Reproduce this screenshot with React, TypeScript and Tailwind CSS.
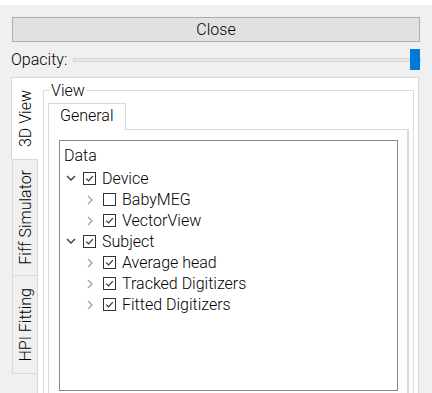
type Row = { label: string; child?: boolean; open?: boolean; checked: boolean };

const rows: Row[] = [
  { label: "Device", open: true, checked: true },
  { label: "BabyMEG", child: true, checked: false },
  { label: "VectorView", child: true, checked: true },
  { label: "Subject", open: true, checked: true },
  { label: "Average head", child: true, checked: true },
  { label: "Tracked Digitizers", child: true, checked: true },
  { label: "Fitted Digitizers", child: true, checked: true },
];

function Chevron({ open }: { open?: boolean }) {
  return (
    <div className="flex w-[13px] justify-center">
      {open ? (
        <svg width="10" height="6" viewBox="0 0 10 6" className="-mt-[2px]">
          <path d="M1 1 L5 5 L9 1" fill="none" stroke="#454545" strokeWidth="1.5" />
        </svg>
      ) : (
        <svg width="6" height="10" viewBox="0 0 6 10" className="-ml-[1px]">
          <path d="M1 1 L5 5 L1 9" fill="none" stroke="#a3a3a3" strokeWidth="1.4" />
        </svg>
      )}
    </div>
  );
}

function Check({ checked }: { checked: boolean }) {
  return (
    <div className="ml-[6px] flex h-[13px] w-[13px] items-center justify-center border border-[#333333] bg-white">
      {checked && (
        <svg width="11" height="11" viewBox="0 0 11 11">
          <path d="M2.2 5.6 L4.6 8 L8.9 3.2" fill="none" stroke="#333333" strokeWidth="1.2" />
        </svg>
      )}
    </div>
  );
}

function SideTab({ label, className }: { label: string; className: string }) {
  return (
    <div className={`flex items-center justify-center border-[#d9d9d9] ${className}`}>
      <span className="rotate-180 whitespace-nowrap leading-[21px] [writing-mode:vertical-rl]">{label}</span>
    </div>
  );
}

export default function App() {
  return (
    <div className="h-[393px] w-[432px] overflow-hidden bg-white pt-[5px] font-['Roboto',sans-serif] text-[16px] font-light text-black">
      <div className="h-full bg-[#f0f0f0] px-[11px] pt-[12px]">
        <button
          type="button"
          className="ml-[1px] flex h-[25px] w-[408px] items-center justify-center border border-[#adadad] bg-[#e1e1e1] leading-none"
        >
          Close
        </button>

        <div className="mt-[7px] flex h-[21px] items-center">
          <span className="leading-none">Opacity:</span>
          <div className="relative ml-[6px] flex h-[21px] flex-1 items-center">
            <div className="h-[4px] w-full border border-[#d6d6d6] bg-[#e9e9e9]" />
            <div className="absolute right-[1px] top-0 h-[21px] w-[10px] bg-[#0078d7]" />
          </div>
        </div>

        <div className="mt-[7px] flex h-[330px] w-[408px]">
          <div className="relative z-10 flex w-[26px] flex-col">
            <SideTab label="3D View" className="h-[82px] w-[27px] border-l border-t bg-white" />
            <SideTab label="Fiff Simulator" className="ml-[1px] h-[116px] w-[25px] border-l border-t" />
            <SideTab label="HPI Fitting" className="ml-[1px] h-[99px] w-[25px] border-b border-l border-t" />
          </div>

          <div className="flex-1 border border-[#d9d9d9] bg-white pl-[5px] pr-[4px] pt-[2px]">
            <fieldset className="h-[400px] border border-[#dcdcdc] pl-[4px] pr-[4px]">
              <legend className="ml-[2px] px-[1px] leading-[21px]">View</legend>
              <div className="mt-[2px] flex">
                <div className="relative z-10 -mb-px flex h-[27px] items-center border-x border-t border-[#d9d9d9] bg-white px-[11px] pb-[2px] leading-none">
                  General
                </div>
              </div>
              <div className="h-[300px] border border-r-2 border-[#d9d9d9] pl-[10px] pr-[9px] pt-[10px]">
                <div className="h-[251px] border border-[#828790] pl-[4px] pt-[4px]">
                  <div className="h-[21px] leading-[21px]">Data</div>
                  <div className="mt-[2px]">
                    {rows.map((r) => (
                      <div key={r.label} className={`flex h-[21px] items-center ${r.child ? "pl-[20px]" : ""}`}>
                        <Chevron open={r.open} />
                        <Check checked={r.checked} />
                        <span className="ml-[6px] whitespace-nowrap leading-none">{r.label}</span>
                      </div>
                    ))}
                  </div>
                </div>
              </div>
            </fieldset>
          </div>
        </div>
      </div>
    </div>
  );
}
